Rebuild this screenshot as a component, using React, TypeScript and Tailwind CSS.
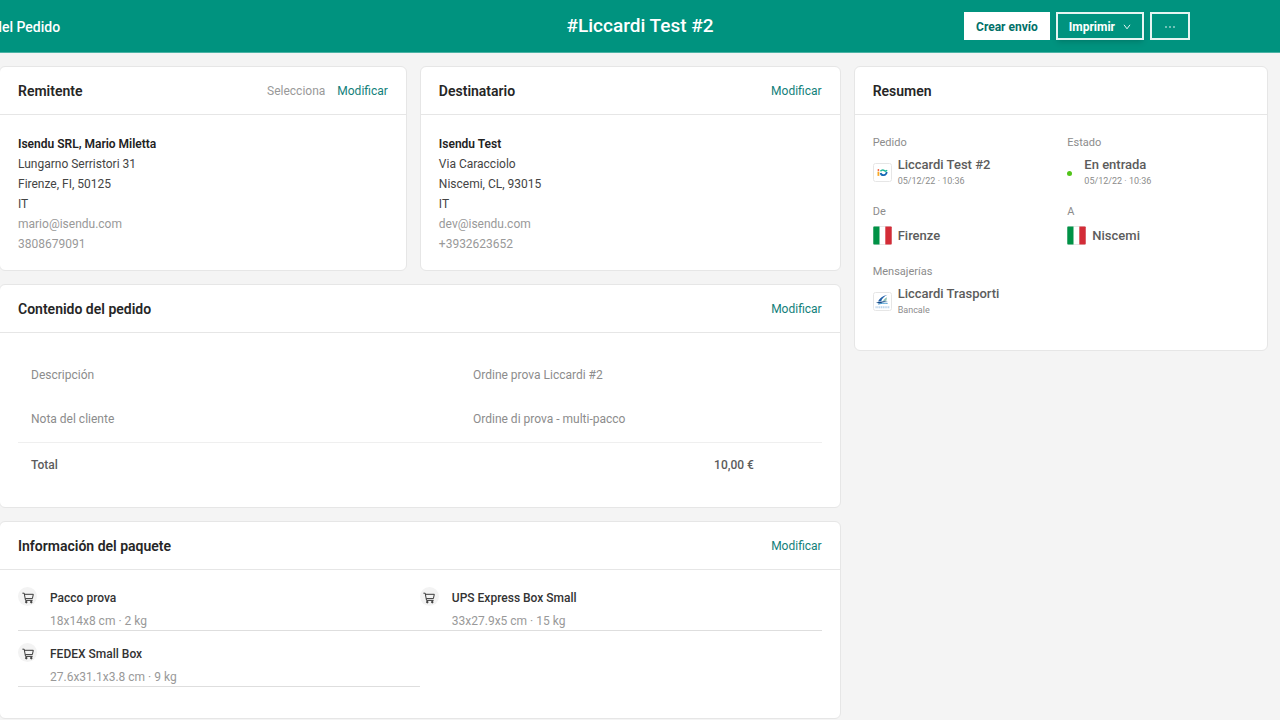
import React from "react";

type CardProps = {
  title: string;
  actions?: React.ReactNode;
  className?: string;
  children: React.ReactNode;
};

const parcels = [
  { name: "Pacco prova", details: "18x14x8 cm · 2 kg" },
  { name: "UPS Express Box Small", details: "33x27.9x5 cm · 15 kg" },
  { name: "FEDEX Small Box", details: "27.6x31.1x3.8 cm · 9 kg" },
];

/**
 * White panel with a title bar and optional actions on the right.
 */
function Card({ title, actions, className = "", children }: Readonly<CardProps>) {
  return (
    <section
      className={`rounded-md border border-[#e6e6e6] bg-white ${className}`}
    >
      <div className="flex h-12 items-center justify-between border-b border-[#e6e6e6] px-[18px] pt-px">
        <h2 className="text-sm font-semibold text-[#262626]">{title}</h2>
        {actions && <div className="flex items-center gap-3">{actions}</div>}
      </div>
      {children}
    </section>
  );
}

function EditLink() {
  return (
    <a href="#modificar" className="text-xs text-[#12807a]">
      Modificar
    </a>
  );
}

type AddressProps = {
  name: string;
  lines: string[];
  email: string;
  phone: string;
};

function Address({ name, lines, email, phone }: Readonly<AddressProps>) {
  return (
    <div className="px-[18px] pt-[19px] pb-4 text-xs leading-5 text-[#444]">
      <p className="font-semibold text-[#222]">{name}</p>
      {lines.map((line) => (
        <p key={line}>{line}</p>
      ))}
      <p className="text-[#999]">{email}</p>
      <p className="text-[#999]">{phone}</p>
    </div>
  );
}

type SummaryItemProps = {
  label: string;
  icon: React.ReactNode;
  title: string;
  subtitle?: string;
  wide?: boolean;
};

function SummaryItem({
  label,
  icon,
  title,
  subtitle,
  wide = false,
}: Readonly<SummaryItemProps>) {
  return (
    <div>
      <p className="text-[11px] leading-[18px] text-[#8c8c8c]">{label}</p>
      <div
        className={`mt-[3px] flex min-h-6 items-center ${wide ? "gap-3" : "gap-1.5"} ${subtitle ? "" : "pb-0.5"}`}
      >
        <span className={subtitle ? "pt-0.5" : ""}>{icon}</span>
        <div>
          <p className="text-[13px] leading-[19px] font-medium text-[#5c5c5c]">
            {title}
          </p>
          {subtitle && (
            <p className="text-[9px] leading-[14px] text-[#8c8c8c]">
              {subtitle}
            </p>
          )}
        </div>
      </div>
    </div>
  );
}

function ItalyFlag() {
  return (
    <svg viewBox="0 0 19 19" className="size-[19px] shrink-0" aria-hidden="true">
      <rect x="0.5" y="0.5" width="18" height="18" rx="1" fill="#fff" stroke="#e8e8e8" />
      <path d="M1 0.5h5.5v18H1a.7.7 0 0 1-.7-.7V1.2A.7.7 0 0 1 1 .5z" fill="#009246" />
      <path d="M12.3 0.5H18a.7.7 0 0 1 .7.7v16.6a.7.7 0 0 1-.7.7h-5.7z" fill="#d32c37" />
    </svg>
  );
}

function IsenduLogo() {
  return (
    <svg viewBox="0 0 19 19" className="size-[19px] shrink-0" aria-hidden="true">
      <rect x="0.5" y="0.5" width="18" height="18" rx="2" fill="#fff" stroke="#e6e6e6" />
      <circle cx="5.4" cy="7" r="0.9" fill="#ef5b3c" />
      <path d="M5.4 8.6v4.3" stroke="#f9a825" strokeWidth="1.8" />
      <path d="M7.4 8.3c1.4-1.7 2.9-1.5 4-.7s1.9.6 2.5-.5" fill="none" stroke="#20b89a" strokeWidth="1.6" />
      <path d="M7.6 10c.7 2.9 5.6 3.2 6.1-1" fill="none" stroke="#1769b5" strokeWidth="1.8" />
    </svg>
  );
}

function LiccardiLogo() {
  return (
    <svg viewBox="0 0 19 19" className="size-[19px] shrink-0" aria-hidden="true">
      <rect x="0.5" y="0.5" width="18" height="18" rx="2" fill="#fff" stroke="#e6e6e6" />
      <path d="M14.5 2.8C10 3.6 6.4 6.3 5.2 9.6l3-.3c.7-2.6 2.8-4.9 6.3-6.5z" fill="#1f5fa8" />
      <path d="M14 5.2c-2 .9-3.4 2.3-4 4.1l3.4-.6z" fill="#8fc1b5" />
      <path d="M3 10.8c3.6-1.2 7.6-1.7 12-1.5-3.4.4-6 1.2-7.8 2.5z" fill="#164a87" />
      <path d="M5.2 12.2c3-.9 6-1.2 9.4-.8" fill="none" stroke="#4b9bd0" strokeWidth="1" />
      <path d="M2.5 15.2h14" stroke="#b9d3ea" strokeWidth="2" strokeDasharray="1.2 .6" />
    </svg>
  );
}

function CartIcon() {
  return (
    <span className="flex size-[19px] shrink-0 items-center justify-center rounded-full bg-[#f3f3f3]">
      <svg
        viewBox="0 0 12 12"
        className="mt-0.5 size-3"
        fill="none"
        stroke="#3a3a3a"
        strokeWidth="1"
        strokeLinejoin="round"
        aria-hidden="true"
      >
        <path d="M0.4 1.2h1.8l1.3 7.2h7.1" />
        <path d="M2.4 2.3h8.9l-.9 4.3H3.3" />
        <circle cx="4.3" cy="10.1" r="0.8" fill="#3a3a3a" />
        <circle cx="9.3" cy="10.1" r="0.8" fill="#3a3a3a" />
      </svg>
    </span>
  );
}

function Header() {
  return (
    <header className="grid h-[53px] grid-cols-3 items-center overflow-hidden border-b border-[#4bb3a5] bg-[#00937f] text-white">
      <p className="-ml-1.5 pt-0.5 text-sm font-medium whitespace-nowrap">
        del Pedido
      </p>
      <h1 className="text-center text-[19px] font-medium">#Liccardi Test #2</h1>
      <div className="flex justify-end gap-1.5 pr-[90px]">
        <button
          type="button"
          className="h-7 bg-white px-3 pt-0.5 text-xs font-bold whitespace-nowrap text-[#006f68]"
        >
          Crear envío
        </button>
        <button
          type="button"
          className="flex h-7 items-center gap-2 border-2 border-[#e6f5f2] px-[11px] pt-0.5 text-xs font-bold shadow-md"
        >
          Imprimir
          <svg viewBox="0 0 8 8" className="size-2" fill="none" stroke="currentColor" strokeWidth="0.9" aria-hidden="true">
            <path d="M1 1.8l3 4 3-4" />
          </svg>
        </button>
        <button
          type="button"
          aria-label="Más acciones"
          className="flex h-7 w-10 items-center justify-center border-2 border-[#e6f5f2] pt-0.5"
        >
          <svg viewBox="0 0 12 4" className="h-1 w-3" fill="currentColor" aria-hidden="true">
            <circle cx="2" cy="2" r="0.8" />
            <circle cx="6" cy="2" r="0.8" />
            <circle cx="10" cy="2" r="0.8" />
          </svg>
        </button>
      </div>
    </header>
  );
}

export default function App() {
  return (
    <div className="min-h-screen overflow-hidden bg-[#f4f4f4] font-['Roboto',sans-serif]">
      <Header />
      <main className="-ml-px grid grid-cols-3 items-start gap-[13px] pt-[13px] pr-3">
        <div className="col-span-2 flex flex-col gap-[13px]">
          <div className="grid grid-cols-[408fr_421fr] gap-[13px]">
            <Card
              title="Remitente"
              actions={
                <>
                  <a href="#selecciona" className="text-xs text-[#999]">
                    Selecciona
                  </a>
                  <EditLink />
                </>
              }
            >
              <Address
                name="Isendu SRL, Mario Miletta"
                lines={["Lungarno Serristori 31", "Firenze, FI, 50125", "IT"]}
                email="mario@isendu.com"
                phone="3808679091"
              />
            </Card>
            <Card title="Destinatario" actions={<EditLink />}>
              <Address
                name="Isendu Test"
                lines={["Via Caracciolo", "Niscemi, CL, 93015", "IT"]}
                email="dev@isendu.com"
                phone="+3932623652"
              />
            </Card>
          </div>

          <Card title="Contenido del pedido" actions={<EditLink />}>
            <div className="px-[18px] pt-[19px] pb-[19px]">
              <table className="w-full table-fixed text-left text-xs text-[#8c8c8c]">
                <colgroup>
                  <col className="w-[55%]" />
                  <col className="w-[30%]" />
                  <col className="w-[15%]" />
                </colgroup>
                <tbody>
                  <tr className="h-[45px]">
                    <th className="px-[13px] font-normal">Descripción</th>
                    <td className="px-[13px]" colSpan={2}>
                      Ordine prova Liccardi #2
                    </td>
                  </tr>
                  <tr className="h-[45px] border-b border-[#efefef]">
                    <th className="px-[13px] font-normal">Nota del cliente</th>
                    <td className="px-[13px]" colSpan={2}>
                      Ordine di prova - multi-pacco
                    </td>
                  </tr>
                  <tr className="h-[46px] text-[#5c5c5c]">
                    <th className="px-[13px] font-medium" colSpan={2}>
                      Total
                    </th>
                    <td className="px-[13px] font-medium">10,00 €</td>
                  </tr>
                </tbody>
              </table>
            </div>
          </Card>

          <Card title="Información del paquete" actions={<EditLink />}>
            <ul className="grid grid-cols-2 px-[18px] pt-[5px] pb-[31px] text-xs">
              {parcels.map((parcel) => (
                <li
                  key={parcel.name}
                  className="flex gap-[13px] border-b border-[#dedede] pt-3"
                >
                  <CartIcon />
                  <div>
                    <p className="leading-[22px] font-medium text-[#333]">
                      {parcel.name}
                    </p>
                    <p className="mt-[3px] leading-[18px] text-[#999]">
                      {parcel.details}
                    </p>
                  </div>
                </li>
              ))}
            </ul>
          </Card>
        </div>

        <Card title="Resumen">
          <div className="grid grid-cols-2 gap-x-[13px] gap-y-[15px] px-[18px] pt-[19px] pb-[33px]">
            <SummaryItem
              label="Pedido"
              icon={<IsenduLogo />}
              title="Liccardi Test #2"
              subtitle="05/12/22 · 10:36"
            />
            <SummaryItem
              label="Estado"
              icon={<span className="mt-0.5 block size-[5px] rounded-full bg-[#52c41a]" />}
              title="En entrada"
              subtitle="05/12/22 · 10:36"
              wide
            />
            <SummaryItem label="De" icon={<ItalyFlag />} title="Firenze" />
            <SummaryItem label="A" icon={<ItalyFlag />} title="Niscemi" />
            <SummaryItem
              label="Mensajerías"
              icon={<LiccardiLogo />}
              title="Liccardi Trasporti"
              subtitle="Bancale"
            />
          </div>
        </Card>
      </main>
    </div>
  );
}
